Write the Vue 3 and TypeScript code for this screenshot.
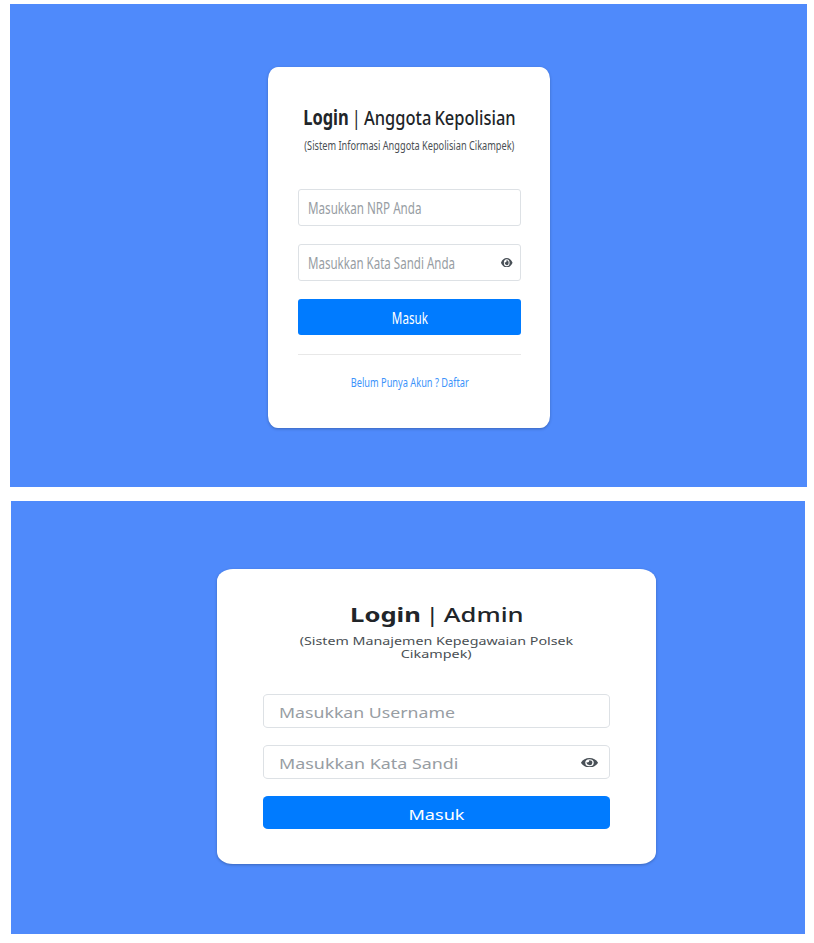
<script setup lang="ts">
import type { Directive } from 'vue'

interface Line {
  text: string
  width: number
}
interface Field extends Line {
  secret?: boolean
}
interface LoginPanel {
  id: string
  title: string
  titleWidth: number
  subtitle: Line[]
  fields: Field[]
  submit: Line
  link?: Line
}

const panels: LoginPanel[] = [
  {
    id: 'member',
    title: 'Anggota Kepolisian',
    titleWidth: 212.5,
    subtitle: [{ text: '(Sistem Informasi Anggota Kepolisian Cikampek)', width: 210 }],
    fields: [
      { text: 'Masukkan NRP Anda', width: 113.5 },
      { text: 'Masukkan Kata Sandi Anda', width: 147, secret: true },
    ],
    submit: { text: 'Masuk', width: 36 },
    link: { text: 'Belum Punya Akun ? Daftar', width: 118 },
  },
  {
    id: 'admin',
    title: 'Admin',
    titleWidth: 173.5,
    subtitle: [
      { text: '(Sistem Manajemen Kepegawaian Polsek', width: 273.5 },
      { text: 'Cikampek)', width: 71 },
    ],
    fields: [
      { text: 'Masukkan Username', width: 176 },
      { text: 'Masukkan Kata Sandi', width: 179.5, secret: true },
    ],
    submit: { text: 'Masuk', width: 56 },
  },
]

// Stretches or condenses a line of text to the given width in pixels.
const vFit: Directive<HTMLElement, number> = {
  mounted(el, binding) {
    const natural = el.getBoundingClientRect().width
    if (natural > 0) el.style.transform = `scaleX(${binding.value / natural})`
  },
}
</script>

<template>
  <main class="page">
    <section v-for="p in panels" :key="p.id" class="panel" :class="p.id">
      <form class="card" @submit.prevent>
        <h1 class="title"><span v-fit="p.titleWidth" class="fit"><b>Login</b><span class="bar"> | </span>{{ p.title }}</span></h1>
        <div class="subtitle">
          <div v-for="s in p.subtitle" :key="s.text" class="subline">
            <span v-fit="s.width" class="fit">{{ s.text }}</span>
          </div>
        </div>
        <div v-for="f in p.fields" :key="f.text" class="field">
          <span v-fit="f.width" class="fit start">{{ f.text }}</span>
          <svg v-if="f.secret" class="eye" viewBox="0 64 576 384" preserveAspectRatio="none">
            <path d="M572.52 241.4C518.29 135.59 410.93 64 288 64S57.68 135.64 3.48 241.41a32.35 32.35 0 0 0 0 29.19C57.71 376.41 165.07 448 288 448s230.32-71.64 284.52-177.41a32.35 32.35 0 0 0 0-29.19zM288 400a144 144 0 1 1 144-144 143.93 143.93 0 0 1-144 144zm0-240a95.31 95.31 0 0 0-25.31 3.79 47.85 47.85 0 0 1-66.9 66.9A95.78 95.78 0 1 0 288 160z" />
          </svg>
        </div>
        <button class="submit" type="submit"><span v-fit="p.submit.width" class="fit">{{ p.submit.text }}</span></button>
        <template v-if="p.link">
          <hr class="rule" />
          <a class="link"><span v-fit="p.link.width" class="fit">{{ p.link.text }}</span></a>
        </template>
      </form>
    </section>
  </main>
</template>

<style>
body {
  background: #fff;
}
</style>

<style scoped>
.page {
  box-sizing: border-box;
  width: 814px;
  height: 943px;
  padding: 4px 0 0 10px;
  display: flex;
  flex-direction: column;
  gap: 14px;
  overflow: hidden;
  font-family: 'Noto Sans', 'Open Sans', sans-serif;
}
.panel {
  box-sizing: border-box;
  background: #4f8afb;
  display: flex;
  align-items: flex-start;
  flex: none;
}
.panel.member {
  width: 797px;
  height: 483px;
  padding: 63px 0 0 258.4px;
}
.panel.admin {
  width: 794px;
  height: 433px;
  margin-left: 1px;
  padding: 68px 0 0 206px;
}
.card {
  box-sizing: border-box;
  background: #fff;
  display: flex;
  flex-direction: column;
  box-shadow: 0 1px 3px rgba(0, 0, 0, 0.25);
}
.member .card {
  width: 282px;
  height: 361px;
  padding: 37px 29.5px 0;
  border-radius: 10px / 12px;
}
.admin .card {
  width: 439px;
  height: 295px;
  padding: 34px 46px 0;
  border-radius: 16px / 12px;
}
.fit {
  display: inline-block;
  white-space: pre;
  flex: none;
}
.fit.start {
  transform-origin: 0 50%;
  margin-right: -60px;
}
.title,
.subline,
.link {
  display: flex;
  justify-content: center;
}
.title {
  margin: 0;
  font-weight: 500;
  color: #212529;
}
.title b {
  font-weight: 700;
}
.title .bar {
  font-weight: 400;
}
.member .title {
  font-size: 20.7px;
  line-height: 26px;
  word-spacing: -1.5px;
}
.admin .title {
  font-size: 20px;
  line-height: 24px;
  word-spacing: -1.7px;
}
.admin .title .fit {
  margin-left: 1px;
}
.subtitle {
  color: #4a4f54;
}
.member .subtitle {
  margin: 8px 0 36px;
  font-size: 11.7px;
  line-height: 15px;
}
.admin .subtitle {
  margin: 6.5px 0 33px;
  font-size: 11px;
  line-height: 13.5px;
}
.field {
  box-sizing: border-box;
  border: 1px solid #dde1e5;
  display: flex;
  align-items: center;
  justify-content: space-between;
  color: #979da3;
}
.member .field {
  height: 37px;
  margin-bottom: 18px;
  padding: 0 7px 0 9.5px;
  border-radius: 3px;
  font-size: 15.4px;
}
.member .field .fit {
  padding-top: 1px;
}
.admin .field {
  height: 34px;
  margin-bottom: 17px;
  padding: 0 11px 0 15px;
  border-radius: 5px / 4px;
  font-size: 14.5px;
}
.admin .field .fit,
.admin .submit .fit {
  padding-top: 3px;
}
.eye {
  fill: #495057;
  flex: none;
}
.member .eye {
  width: 11.5px;
  height: 9.5px;
}
.admin .eye {
  width: 17px;
  height: 9.5px;
  margin-top: 2px;
}
.submit {
  border: 0;
  padding: 0;
  background: #007bff;
  color: #fff;
  font-family: inherit;
  display: flex;
  align-items: center;
  justify-content: center;
}
.member .submit {
  height: 36px;
  border-radius: 3px;
  font-size: 15.4px;
}
.member .submit .fit {
  padding-top: 3px;
}
.admin .submit {
  height: 33.5px;
  border-radius: 5px / 4px;
  font-size: 14.5px;
}
.rule {
  width: 100%;
  height: 1px;
  margin: 19px 0;
  border: 0;
  background: #e8e8e8;
}
.link {
  color: #3b93fb;
  font-size: 11.7px;
  line-height: 16px;
}
</style>
